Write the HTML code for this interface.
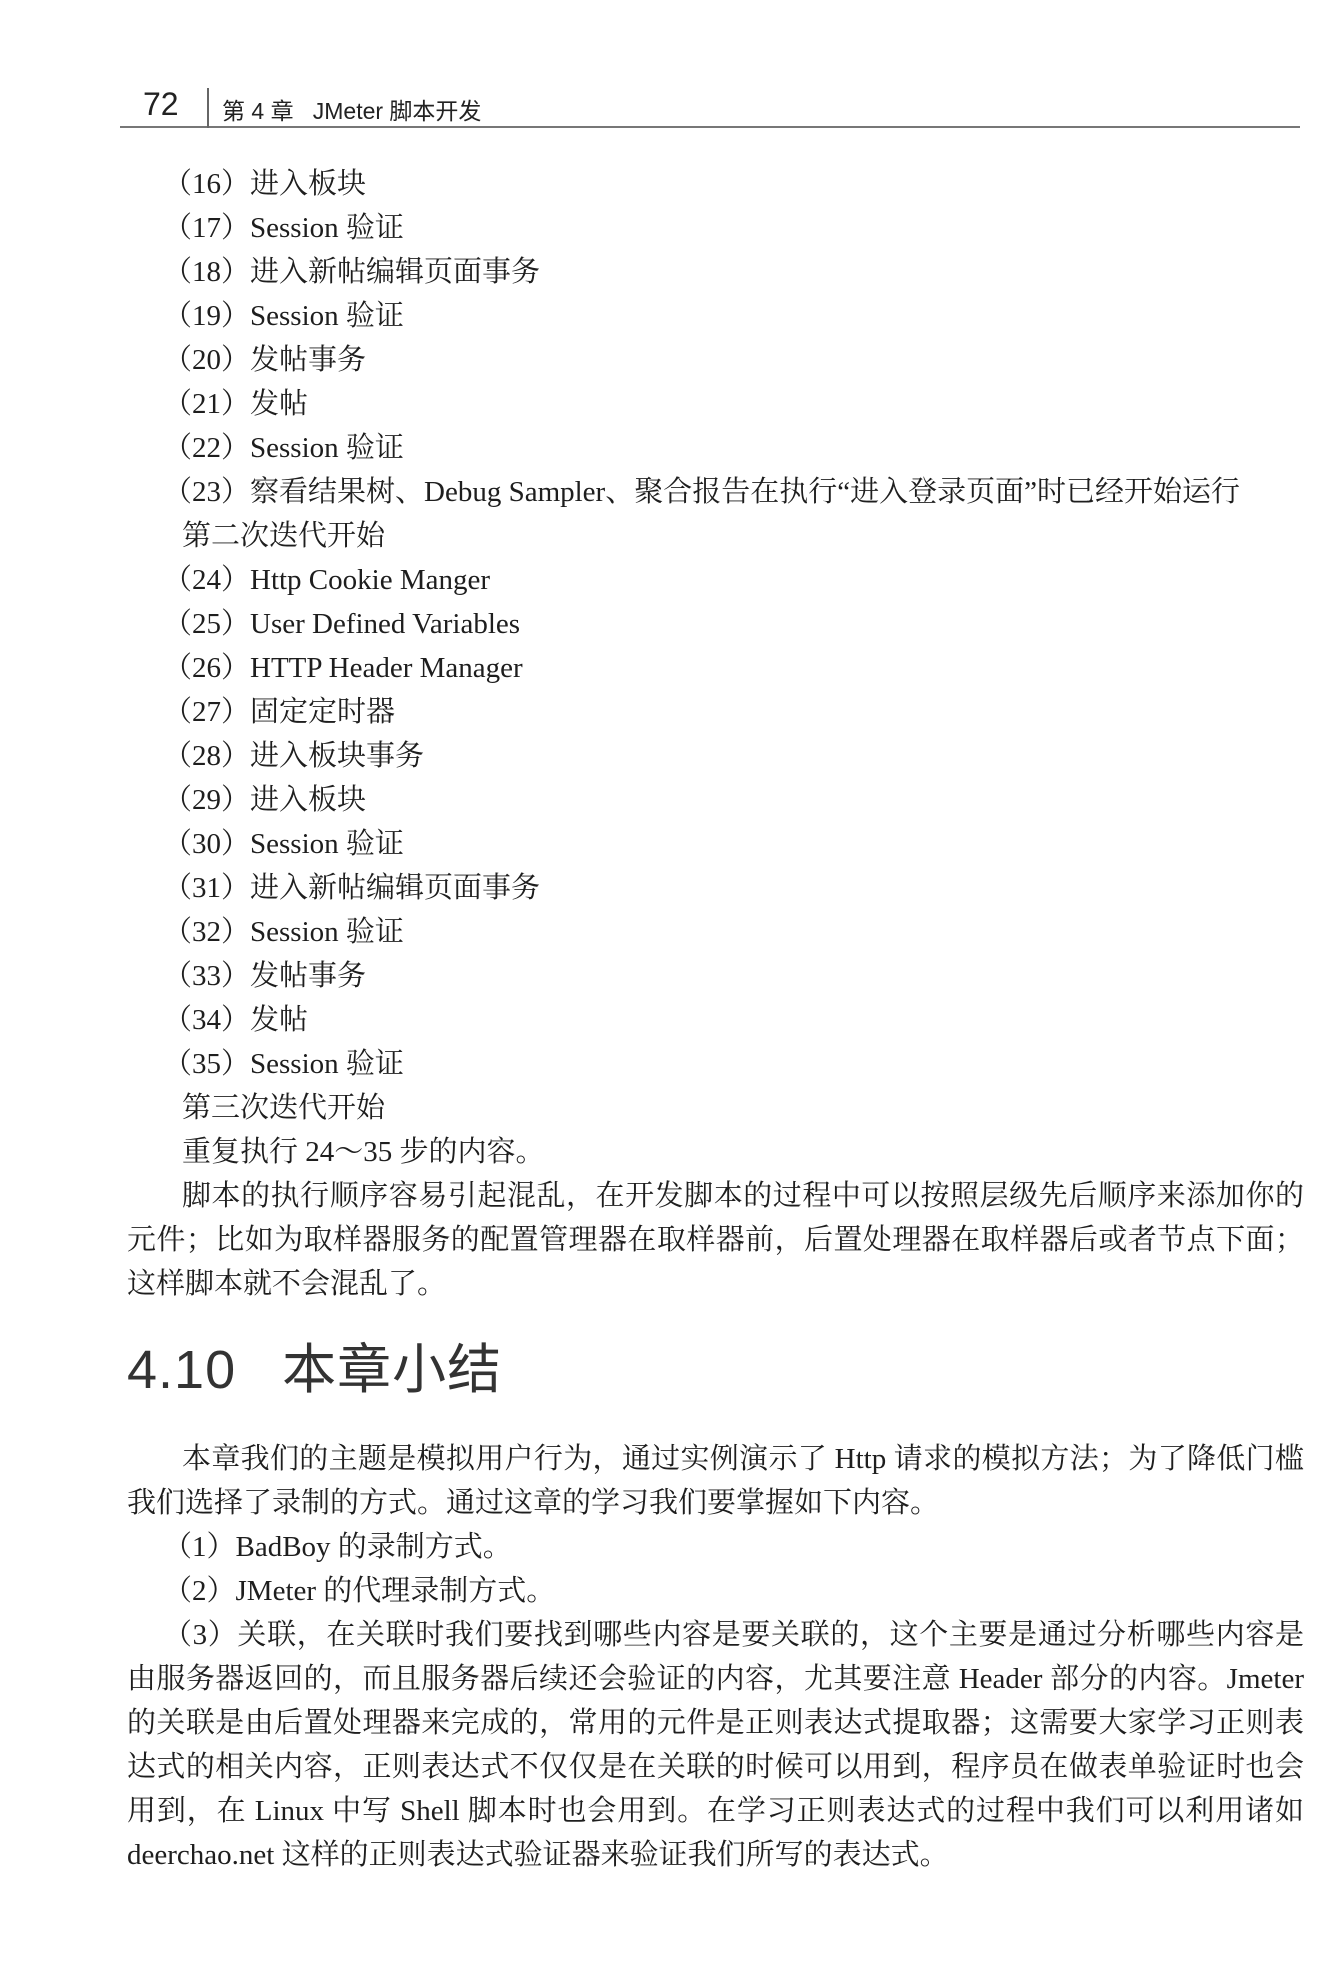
<!DOCTYPE html>
<html><head><meta charset="utf-8">
<style>
html,body{margin:0;padding:0;background:#fff;}
body{width:1332px;height:1969px;position:relative;overflow:hidden;color:#1e1e1e;
font-family:"Liberation Serif","Noto Serif CJK SC",serif;}
.hdr{position:absolute;left:120px;top:86px;width:1180px;height:40px;border-bottom:2px solid #777;}
.pg{position:absolute;left:23px;top:0px;font:32px "Liberation Sans",sans-serif;color:#222;}
.bar{position:absolute;left:87px;top:2px;width:2px;height:40px;background:#666;}
.ht{position:absolute;left:102px;top:6px;font:23px "Liberation Sans","Noto Sans CJK SC",sans-serif;color:#222;}
.sec{position:absolute;left:127px;width:1177px;font-size:29px;line-height:44px;}
.sec p{margin:0;white-space:nowrap;}
.i{padding-left:36px;}
.j{text-align:justify;text-align-last:justify;white-space:normal!important;}
.ind{padding-left:55px;}
h2{position:absolute;left:127px;top:1338px;margin:0;font:54px/64px "Liberation Sans","Noto Sans CJK SC",sans-serif;color:#333;font-weight:normal;letter-spacing:1px;}
h2 span{margin-left:46px;}
</style></head><body>
<div class="hdr"><div class="pg">72</div><div class="bar"></div><div class="ht">第 4 章&nbsp;&nbsp; JMeter 脚本开发</div></div>
<div class="sec" style="top:162px">
<p class="i">（16）进入板块</p>
<p class="i">（17）Session 验证</p>
<p class="i">（18）进入新帖编辑页面事务</p>
<p class="i">（19）Session 验证</p>
<p class="i">（20）发帖事务</p>
<p class="i">（21）发帖</p>
<p class="i">（22）Session 验证</p>
<p class="i">（23）察看结果树、Debug Sampler、聚合报告在执行“进入登录页面”时已经开始运行</p>
<p class="ind">第二次迭代开始</p>
<p class="i">（24）Http Cookie Manger</p>
<p class="i">（25）User Defined Variables</p>
<p class="i">（26）HTTP Header Manager</p>
<p class="i">（27）固定定时器</p>
<p class="i">（28）进入板块事务</p>
<p class="i">（29）进入板块</p>
<p class="i">（30）Session 验证</p>
<p class="i">（31）进入新帖编辑页面事务</p>
<p class="i">（32）Session 验证</p>
<p class="i">（33）发帖事务</p>
<p class="i">（34）发帖</p>
<p class="i">（35）Session 验证</p>
<p class="ind">第三次迭代开始</p>
<p class="ind">重复执行 24～35 步的内容。</p>
<p class="ind j">脚本的执行顺序容易引起混乱，在开发脚本的过程中可以按照层级先后顺序来添加你的</p>
<p class="j">元件；比如为取样器服务的配置管理器在取样器前，后置处理器在取样器后或者节点下面；</p>
<p>这样脚本就不会混乱了。</p>
</div>
<h2>4.10<span>本章小结</span></h2>
<div class="sec" style="top:1437px">
<p class="ind j">本章我们的主题是模拟用户行为，通过实例演示了 Http 请求的模拟方法；为了降低门槛</p>
<p>我们选择了录制的方式。通过这章的学习我们要掌握如下内容。</p>
<p class="i">（1）BadBoy 的录制方式。</p>
<p class="i">（2）JMeter 的代理录制方式。</p>
<p class="i j">（3）关联，在关联时我们要找到哪些内容是要关联的，这个主要是通过分析哪些内容是</p>
<p class="j">由服务器返回的，而且服务器后续还会验证的内容，尤其要注意 Header 部分的内容。Jmeter</p>
<p class="j">的关联是由后置处理器来完成的，常用的元件是正则表达式提取器；这需要大家学习正则表</p>
<p class="j">达式的相关内容，正则表达式不仅仅是在关联的时候可以用到，程序员在做表单验证时也会</p>
<p class="j">用到，在 Linux 中写 Shell 脚本时也会用到。在学习正则表达式的过程中我们可以利用诸如</p>
<p>deerchao.net 这样的正则表达式验证器来验证我们所写的表达式。</p>
</div>
</body></html>
